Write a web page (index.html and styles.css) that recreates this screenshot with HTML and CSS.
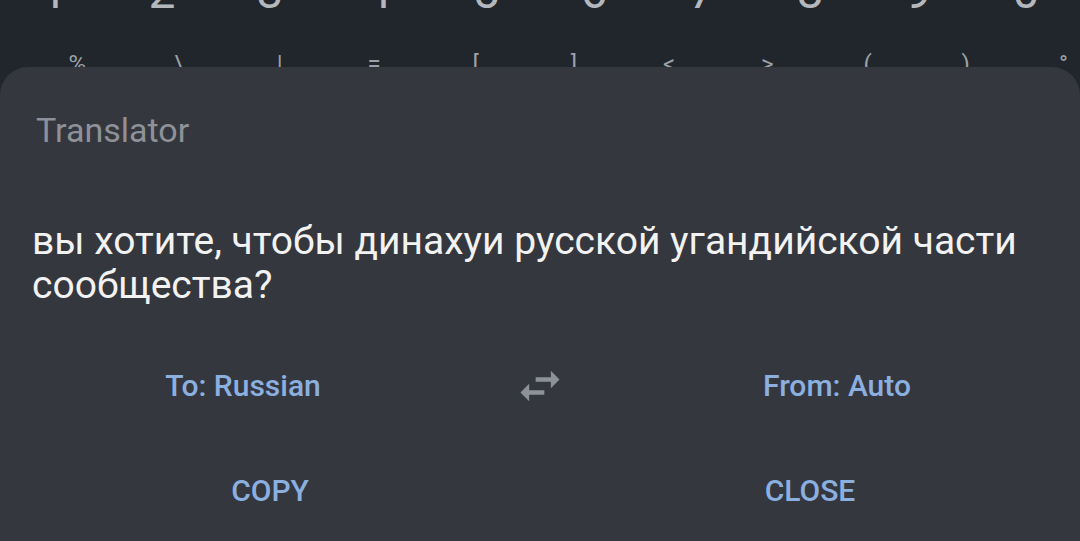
FILE: index.html
```html
<!DOCTYPE html>
<html lang="ru">
  <head>
    <meta charset="UTF-8">
    <title>Translator</title>
    <link rel="stylesheet" href="styles.css">
  </head>
  <body>
    <div class="keyboard">
      <div class="digit-row">
        <span class="digit">1</span>
        <span class="digit">2</span>
        <span class="digit">3</span>
        <span class="digit">4</span>
        <span class="digit">5</span>
        <span class="digit">6</span>
        <span class="digit">7</span>
        <span class="digit">8</span>
        <span class="digit">9</span>
        <span class="digit">0</span>
      </div>
      <div class="hint-row">
        <span class="hint">%</span>
        <span class="hint">\</span>
        <span class="hint">|</span>
        <span class="hint">=</span>
        <span class="hint">[</span>
        <span class="hint">]</span>
        <span class="hint">&lt;</span>
        <span class="hint">&gt;</span>
        <span class="hint">(</span>
        <span class="hint">)</span>
        <span class="hint">°</span>
      </div>
    </div>

    <div class="dialog">
      <div class="dialog-title">Translator</div>
      <div class="dialog-text">вы хотите, чтобы динахуи русской угандийской части сообщества?</div>

      <div class="lang-row">
        <span class="lang">To: Russian</span>
        <span class="swap">
          <svg width="52" height="52" viewBox="0 0 24 24">
            <path d="M6.99 11L3 15l3.99 4v-3H14v-2H6.99v-3zM21 9l-3.99-4v3H10v2h7.01v3L21 9z"/>
          </svg>
        </span>
        <span class="lang">From: Auto</span>
      </div>

      <div class="action-row">
        <span class="action">COPY</span>
        <span class="action">CLOSE</span>
      </div>
    </div>
  </body>
</html>
```

FILE: styles.css
```css
html, body {
	margin: 0;
	padding: 0;
}
body {
	width: 1080px;
	height: 541px;
	overflow: hidden;
	background-color: #20262c;
	font-family: Roboto, "Noto Sans", sans-serif;
}

/* keyboard peeking out above the sheet */
.keyboard {
	height: 67px;
	overflow: hidden;
}
.digit-row {
	display: flex;
	margin-top: -34px;
	font-size: 48px;
	line-height: 52px;
	color: #b4b8bd;
}
.digit {
	flex: 1;
	text-align: center;
}
.hint-row {
	display: flex;
	margin-top: 33px;
	font-size: 24px;
	line-height: 26px;
	color: #9ca1a7;
}
.hint {
	flex: 1;
	text-align: right;
	padding-right: 12px;
}

/* bottom sheet */
.dialog {
	background-color: #35373e;
	border-radius: 28px 28px 0 0;
	height: 474px;
}
.dialog-title {
	padding: 43px 34px 0 36px;
	font-size: 34px;
	line-height: 40px;
	color: #8e9298;
}
.dialog-text {
	margin-top: 69px;
	padding: 0 30px 0 32px;
	font-size: 39px;
	line-height: 44px;
	color: #f2f2f2;
}
.lang-row {
	display: grid;
	grid-template-columns: 1fr 156px 1fr;
	align-items: center;
	margin-top: 59px;
	padding: 0 24px;
}
.lang {
	text-align: center;
	font-size: 30px;
	font-weight: 500;
	line-height: 40px;
	color: #8bb0e0;
}
.swap {
	display: flex;
	justify-content: center;
	height: 40px;
	align-items: center;
}
.swap svg {
	fill: #8d9198;
}
.action-row {
	display: grid;
	grid-template-columns: 1fr 1fr;
	margin-top: 65px;
}
.action {
	text-align: center;
	font-size: 30px;
	font-weight: 500;
	line-height: 40px;
	color: #8bb0e0;
}
```
